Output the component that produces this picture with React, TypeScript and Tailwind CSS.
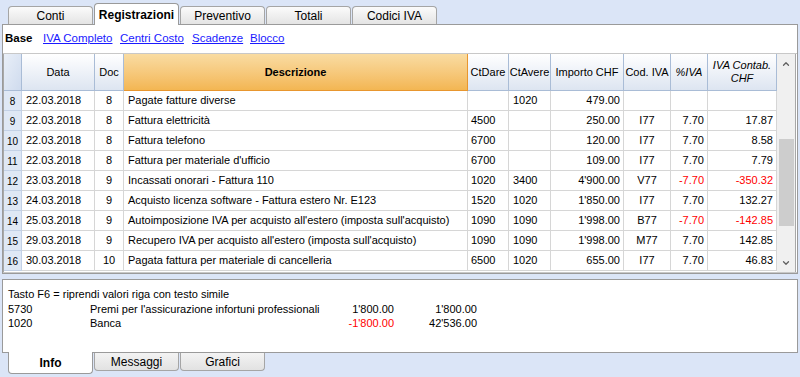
import { ChevronUp, ChevronDown } from "lucide-react";

type Row = {
  n: number;
  data: string;
  doc: string;
  desc: string;
  dare: string;
  avere: string;
  imp: string;
  cod: string;
  piva: string;
  ivac: string;
  neg?: boolean;
};

const rows: Row[] = [
  { n: 8, data: "22.03.2018", doc: "8", desc: "Pagate fatture diverse", dare: "", avere: "1020", imp: "479.00", cod: "", piva: "", ivac: "" },
  { n: 9, data: "22.03.2018", doc: "8", desc: "Fattura elettricità", dare: "4500", avere: "", imp: "250.00", cod: "I77", piva: "7.70", ivac: "17.87" },
  { n: 10, data: "22.03.2018", doc: "8", desc: "Fattura telefono", dare: "6700", avere: "", imp: "120.00", cod: "I77", piva: "7.70", ivac: "8.58" },
  { n: 11, data: "22.03.2018", doc: "8", desc: "Fattura per materiale d'ufficio", dare: "6700", avere: "", imp: "109.00", cod: "I77", piva: "7.70", ivac: "7.79" },
  { n: 12, data: "23.03.2018", doc: "9", desc: "Incassati onorari - Fattura 110", dare: "1020", avere: "3400", imp: "4'900.00", cod: "V77", piva: "-7.70", ivac: "-350.32", neg: true },
  { n: 13, data: "24.03.2018", doc: "9", desc: "Acquisto licenza software - Fattura estero Nr. E123", dare: "1520", avere: "1020", imp: "1'850.00", cod: "I77", piva: "7.70", ivac: "132.27" },
  { n: 14, data: "25.03.2018", doc: "9", desc: "Autoimposizione IVA per acquisto all'estero (imposta sull'acquisto)", dare: "1090", avere: "1090", imp: "1'998.00", cod: "B77", piva: "-7.70", ivac: "-142.85", neg: true },
  { n: 15, data: "29.03.2018", doc: "9", desc: "Recupero IVA per acquisto all'estero (imposta sull'acquisto)", dare: "1090", avere: "1090", imp: "1'998.00", cod: "M77", piva: "7.70", ivac: "142.85" },
  { n: 16, data: "30.03.2018", doc: "10", desc: "Pagata fattura per materiale di cancelleria", dare: "6500", avere: "1020", imp: "655.00", cod: "I77", piva: "7.70", ivac: "46.83" },
];

const cols = "grid grid-cols-[18px_73px_29px_344px_41px_42px_73px_47px_37px_69px]";

function TopTab({ label, active }: { label: string; active?: boolean }) {
  if (active) {
    return (
      <div className="relative z-10 w-[85px] h-[22px] mr-[1px] -mb-px bg-white border border-b-0 border-[#9a9a9a] rounded-t-[4px] flex items-center justify-center text-[12px] font-bold text-black">
        {label}
      </div>
    );
  }
  return (
    <div className="w-[85px] h-[18px] mr-[1px] bg-gradient-to-b from-[#fbfbfb] to-[#e4e4e4] border border-b-0 border-[#a5a5a5] rounded-t-[4px] flex items-center justify-center text-[12px] text-black">
      {label}
    </div>
  );
}

function BottomTab({ label, active }: { label: string; active?: boolean }) {
  if (active) {
    return (
      <div className="relative z-10 w-[85px] h-[22px] mr-[1px] -mt-px bg-white border border-t-0 border-[#9a9a9a] rounded-b-[4px] flex items-center justify-center text-[12px] font-bold text-black">
        {label}
      </div>
    );
  }
  return (
    <div className="w-[85px] h-[18px] mr-[1px] bg-gradient-to-b from-[#f3f3f3] to-[#e2e2e2] border border-t-0 border-[#a5a5a5] rounded-b-[4px] flex items-center justify-center text-[12px] text-black">
      {label}
    </div>
  );
}

export default function App() {
  const hcell = "border-r border-b border-[#a9bcd6] bg-gradient-to-b from-white to-[#dde5f1] flex items-center justify-center text-center text-[11px] leading-[13px] text-black";
  const cell = "border-r border-b border-[#d6d6d6] h-[20px] flex items-center text-[11px] whitespace-nowrap overflow-hidden";

  return (
    <div className="w-[800px] h-[377px] bg-[#dbe5f7] overflow-hidden flex flex-col font-['Liberation_Sans',Arial,sans-serif]">
      {/* top tabs */}
      <div className="h-[24px] flex items-end pl-[8px]">
        <TopTab label="Conti" />
        <TopTab label="Registrazioni" active />
        <TopTab label="Preventivo" />
        <TopTab label="Totali" />
        <TopTab label="Codici IVA" />
      </div>

      {/* main panel */}
      <div className="mx-[2px] h-[250px] bg-white border border-[#9a9a9a] flex flex-col">
        <div className="h-[28px] flex items-center pl-[2px] text-[11.5px] whitespace-nowrap">
          <span className="w-[38px] font-bold text-black">Base</span>
          <span className="w-[77px] text-[#1a1aff] underline">IVA Completo</span>
          <span className="w-[72px] text-[#1a1aff] underline">Centri Costo</span>
          <span className="w-[58px] text-[#1a1aff] underline">Scadenze</span>
          <span className="text-[#1a1aff] underline">Blocco</span>
        </div>

        <div className="flex-1 flex border-t border-[#c8c8c8] border-b">
          <div className="w-[1px] bg-[#a8a8a8]" />
          <div className="flex flex-col">
            {/* header */}
            <div className={`${cols} h-[37px]`}>
              <div className="border-r border-b border-[#a9bcd6] bg-gradient-to-br from-[#e9eff8] to-[#cfdbee]" />
              <div className={hcell}>Data</div>
              <div className={hcell}>Doc</div>
              <div className="border-r border-b border-[#e8962e] bg-gradient-to-b from-[#f9dca2] to-[#f3b652] flex items-center justify-center text-[11px] font-bold text-black">
                Descrizione
              </div>
              <div className={hcell}>CtDare</div>
              <div className={hcell}>CtAvere</div>
              <div className={hcell}>Importo CHF</div>
              <div className={hcell}>Cod. IVA</div>
              <div className={`${hcell} italic`}>%IVA</div>
              <div className={`${hcell} italic`}>IVA Contab.<br />CHF</div>
            </div>
            {/* body */}
            {rows.map((r) => {
              const neg = r.neg ? "text-[#ff0000]" : "text-black";
              return (
                <div key={r.n} className={`${cols} text-black`}>
                  <div className="h-[20px] border-r border-b border-[#c3d1e6] bg-[#dfe8f5] flex items-end justify-center pb-[3px] text-[10px] leading-none">
                    {r.n}
                  </div>
                  <div className={`${cell} pl-[4px]`}>{r.data}</div>
                  <div className={`${cell} justify-center`}>{r.doc}</div>
                  <div className={`${cell} pl-[4px]`}>{r.desc}</div>
                  <div className={`${cell} pl-[3px]`}>{r.dare}</div>
                  <div className={`${cell} pl-[4px]`}>{r.avere}</div>
                  <div className={`${cell} justify-end pr-[3px]`}>{r.imp}</div>
                  <div className={`${cell} justify-center`}>{r.cod}</div>
                  <div className={`${cell} justify-end pr-[3px] ${neg}`}>{r.piva}</div>
                  <div className={`${cell} justify-end pr-[3px] ${neg}`}>{r.ivac}</div>
                </div>
              );
            })}
          </div>
          {/* scrollbar */}
          <div className="w-[18px] bg-[#f0f0f0] flex flex-col items-center">
            <ChevronUp className="w-[10px] h-[10px] mt-[5px] text-[#606060]" strokeWidth={3} />
            <div className="h-[70px]" />
            <div className="w-[15px] h-[87px] bg-[#cdcdcd]" />
            <div className="flex-1" />
            <ChevronDown className="w-[10px] h-[10px] mb-[4px] text-[#606060]" strokeWidth={3} />
          </div>
          <div className="w-[1px] bg-[#a8a8a8]" />
        </div>
      </div>

      {/* bottom panel */}
      <div className="mx-[2px] mt-[5px] h-[74px] bg-white border border-[#9a9a9a] pt-[7px] pl-[5px] text-[11px] leading-[14.5px] text-black whitespace-nowrap">
        <div>Tasto F6 = riprendi valori riga con testo simile</div>
        <div className="flex">
          <span className="w-[82px]">5730</span>
          <span className="w-[221px]">Premi per l'assicurazione infortuni professionali</span>
          <span className="w-[83px] text-right">1'800.00</span>
          <span className="w-[83px] text-right">1'800.00</span>
        </div>
        <div className="flex">
          <span className="w-[82px]">1020</span>
          <span className="w-[221px]">Banca</span>
          <span className="w-[83px] text-right text-[#ff0000]">-1'800.00</span>
          <span className="w-[83px] text-right">42'536.00</span>
        </div>
      </div>

      {/* bottom tabs */}
      <div className="flex items-start pl-[8px]">
        <BottomTab label="Info" active />
        <BottomTab label="Messaggi" />
        <BottomTab label="Grafici" />
      </div>
    </div>
  );
}
